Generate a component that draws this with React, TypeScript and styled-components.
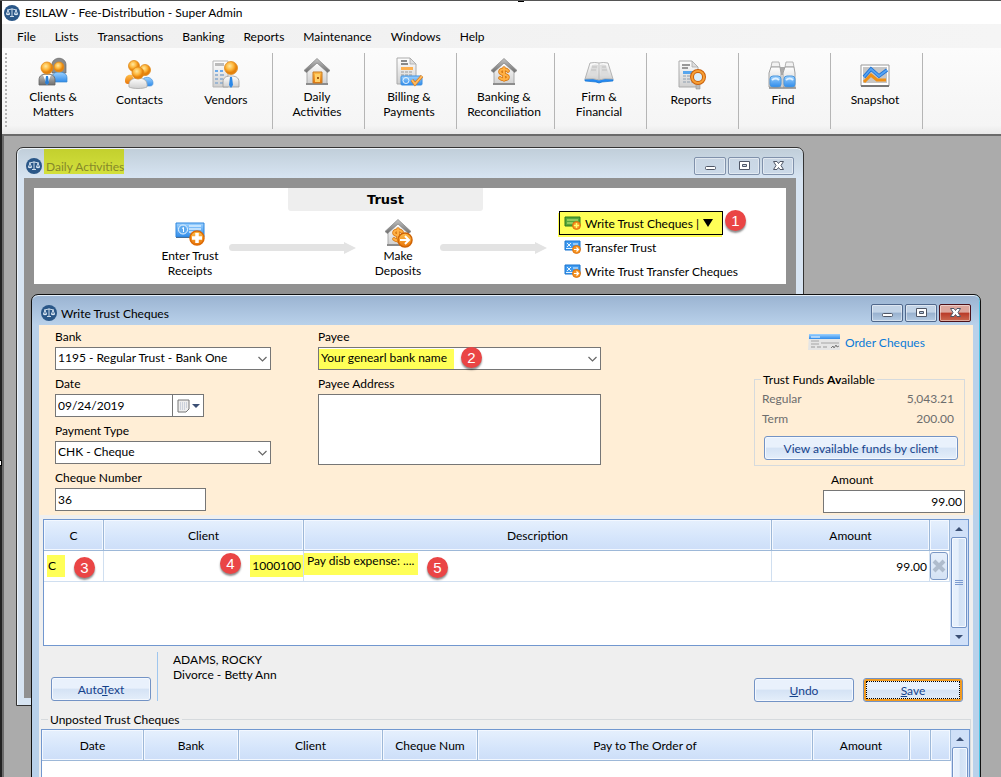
import React from "react";
import styled, { createGlobalStyle, css } from "styled-components";

const Global = createGlobalStyle`
  *, *::before, *::after { box-sizing: border-box; }
  html, body { margin: 0; height: 100%; }
  #root { height: 100%; }
  body, button, input, select, textarea {
    font-family: Lato, "Open Sans", sans-serif;
    font-size: 12px;
    line-height: 15px;
    color: #000;
  }
`;

/* ---------- application frame ---------- */

const Shell = styled.div`
  position: relative;
  display: flex;
  flex-direction: column;
  height: 100vh;
  overflow: hidden;
  border-top: 1px solid #555;
  padding-left: 2px;
  background: #222;
`;

const AppTitle = styled.header`
  display: flex;
  align-items: center;
  gap: 5px;
  height: 23px;
  padding-left: 2px;
  background: #fff;
`;

const MenuBar = styled.nav`
  display: flex;
  gap: 19px;
  height: 24px;
  padding-left: 15px;
  background: linear-gradient(90deg, #f0f0f0, #f5f5f5);
`;

const MenuItem = styled.button`
  border: 0;
  padding: 0;
  background: none;
`;

const Toolbar = styled.div`
  display: flex;
  align-items: flex-start;
  height: 86px;
  flex: none;
  padding-top: 5px;
  background: linear-gradient(#fcfcfc, #f7f7f7 60%, #f5f5f5 90%, #e9e9e9);
`;

const Grip = styled.div`
  width: 2px;
  height: 76px;
  margin: 0 3px;
  background: repeating-linear-gradient(#b4b4b4 0 2px, transparent 2px 4px);
`;

const ToolGroup = styled.div<{ $w: number }>`
  display: flex;
  width: ${(p) => p.$w}px;
  height: 76px;
  padding-right: 3px;
  border-right: 1px solid #b5b5b5;
`;

const ToolButton = styled.button<{ $tall?: boolean }>`
  flex: 1;
  display: flex;
  flex-direction: column;
  align-items: center;
  justify-content: flex-start;
  gap: 2px;
  padding: ${(p) => (p.$tall ? 4 : 7)}px 0 0;
  border: 0;
  background: none;
  white-space: pre-line;
  text-align: center;
`;

const Desktop = styled.main`
  position: relative;
  flex: 1;
  overflow: hidden;
  border-top: 2px solid #6b6b6b;
  border-left: 2px solid #6b6b6b;
  background: #ababab;
`;

const SelectionHandle = styled.i<{ $side: "top" | "left" }>`
  position: absolute;
  width: 6px;
  height: 6px;
  ${(p) =>
    p.$side === "top"
      ? css`top: -5px; left: 518px; background: #000;`
      : css`top: 459px; left: -4px; background: #fff; border: 1px solid #000;`}
`;

/* ---------- floating windows ---------- */

const Window = styled.section<{ $active?: boolean }>`
  position: absolute;
  display: flex;
  flex-direction: column;
  border: 1px solid #333;
  border-radius: 7px 7px 0 0;
  padding: 0 7px 7px;
  ${(p) =>
    p.$active
      ? css`
          top: 158px;
          left: 27px;
          right: 20px;
          border-color: #111;
          box-shadow: inset 0 1px 0 #e6f0fa, inset -1px 0 0 #4cc4e4;
          background: linear-gradient(#9ab3d1, #b9d1ea 30px);
        `
      : css`
          top: 11px;
          left: 12px;
          width: 788px;
          box-shadow: inset 0 1px 0 #eef4fa, inset 1px 0 0 #eef4fa;
          background: linear-gradient(#c0ced9, #d7e4f2 30px);
        `}
`;

const WindowBar = styled.div`
  display: flex;
  align-items: center;
  gap: 4px;
  height: 30px;
  padding: 5px 2px 0 2px;
`;

const WindowTitle = styled.h2`
  flex: 1;
  margin: 0;
  padding-top: 1px;
  font-size: 12px;
  font-weight: 400;
`;

const TitleMark = styled.mark`
  display: inline-block;
  margin: -10px 0 0 -2px;
  padding: 10px 0 0 2px;
  background: linear-gradient(#c3d02e, #d3e03c);
  color: #85882a;
`;

const Controls = styled.div`
  display: flex;
  gap: 2px;
`;

const ControlButton = styled.button<{ $active?: boolean; $close?: boolean }>`
  display: grid;
  place-items: center;
  width: 32px;
  height: 18px;
  padding: 0;
  border-radius: 2px;
  border: 1px solid ${(p) => (p.$active ? (p.$close ? "#4d1119" : "#50688c") : "#8091ab")};
  box-shadow: inset 0 0 0 1px rgba(255, 255, 255, 0.45);
  background: ${(p) =>
    !p.$active
      ? "linear-gradient(#c9d6e4, #cbd9e8)"
      : p.$close
        ? "linear-gradient(#dda79d 0 45%, #b93a27 50%, #cb6a51)"
        : "linear-gradient(#c3d4e7 0 45%, #98b1cf 50%, #b5cbe3)"};
`;

/* ---------- daily activities ---------- */

const DailyBody = styled.div`
  min-height: 520px;
  padding: 10px;
  background: #919191;
`;

const FlowPanel = styled.div`
  height: 96px;
  background: #fff;
`;

const FlowTab = styled.h3`
  width: 195px;
  height: 23px;
  margin: 0 0 0 254px;
  background: #eee;
  border-radius: 0 0 3px 3px;
  font: bold 13px/23px "DejaVu Sans", sans-serif;
  text-align: center;
`;

const FlowRow = styled.div`
  display: flex;
  align-items: center;
  height: 73px;
  padding-left: 117px;
`;

const FlowStep = styled.button<{ $w: number }>`
  display: flex;
  flex-direction: column;
  align-items: center;
  width: ${(p) => p.$w}px;
  padding: 0;
  border: 0;
  background: none;
  white-space: pre-line;
`;

const Arrow = styled.i<{ $w: number }>`
  display: flex;
  align-items: center;
  width: ${(p) => p.$w}px;
  height: 13px;
  &::before {
    content: "";
    flex: 1;
    height: 7px;
    border-radius: 4px 0 0 4px;
    background: #e3e3e3;
  }
  &::after {
    content: "";
    border-left: 12px solid #e3e3e3;
    border-top: 6px solid transparent;
    border-bottom: 6px solid transparent;
  }
`;

const FlowList = styled.div`
  align-self: flex-start;
  display: flex;
  flex-direction: column;
  align-items: flex-start;
  margin-left: 12px;
`;

const FlowLink = styled.button<{ $on?: boolean }>`
  display: flex;
  align-items: center;
  gap: 4px;
  height: 24px;
  padding: 0 9px 0 4px;
  white-space: nowrap;
  border: 1px solid ${(p) => (p.$on ? "#000" : "transparent")};
  background: ${(p) => (p.$on ? "#ffff57" : "none")};
  ${(p) => p.$on && "box-shadow: -1px 2px 0 #ffff57;"}
`;

/* ---------- write trust cheques ---------- */

const Form = styled.form`
  background: #efefef;
`;

const Cream = styled.div`
  display: flex;
  align-items: flex-start;
  height: 190px;
  padding: 2px 8px 0 16px;
  background: #ffeed6;
`;

const Column = styled.div<{ $w: number; $left?: string }>`
  display: flex;
  flex-direction: column;
  gap: 4px;
  width: ${(p) => p.$w}px;
  margin-left: ${(p) => p.$left ?? "0"};
`;

const Field = styled.label`
  display: flex;
  flex-direction: column;
  line-height: 20px;
`;

const AmountField = styled(Field)`
  align-self: flex-end;
  width: 142px;
  & > span { padding-left: 8px; }
`;

const boxed = css`
  border: 1px solid #767676;
  border-radius: 0;
  background-color: #fff;
  outline: 0;
`;

const TextInput = styled.input<{ $w?: string; $right?: boolean }>`
  ${boxed}
  width: ${(p) => p.$w ?? "100%"};
  height: 23px;
  padding: 0 2px;
  text-align: ${(p) => (p.$right ? "right" : "left")};
`;

const SelectWrap = styled.span`
  position: relative;
  display: flex;
  & > svg {
    position: absolute;
    right: 3px;
    top: 8px;
    pointer-events: none;
  }
`;

const Select = styled.select<{ $marked?: boolean }>`
  ${boxed}
  appearance: none;
  width: 100%;
  height: 23px;
  padding: 0 16px 2px 2px;
  ${(p) => p.$marked && "background: linear-gradient(#ffff57, #ffff57) 0 100% / 135px 20px no-repeat #fff;"}
`;

const DateRow = styled.span`
  display: flex;
`;

const DateButton = styled.button`
  ${boxed}
  display: flex;
  align-items: center;
  justify-content: center;
  gap: 2px;
  width: 32px;
  height: 23px;
  margin-left: -1px;
  padding: 0;
`;

const Address = styled.textarea`
  ${boxed}
  height: 71px;
  resize: none;
`;

const OrderLink = styled.a`
  display: flex;
  align-items: center;
  gap: 5px;
  height: 30px;
  margin-bottom: 11px;
  padding-left: 54px;
  color: #0a7ad8;
  text-decoration: none;
`;

const Funds = styled.fieldset`
  margin: 0;
  padding: 2px 6px 5px;
  border: 1px solid #d6dadd;
  min-width: 0;
`;

const Legend = styled.legend`
  padding: 0 2px;
  line-height: 15px;
`;

const FundLine = styled.div`
  display: flex;
  justify-content: space-between;
  padding: 0 4px 0 1px;
  line-height: 20px;
  color: #6d6d6d;
`;

const PushButton = styled.button<{ $w?: number; $focus?: boolean }>`
  width: ${(p) => (p.$w ? `${p.$w}px` : "auto")};
  height: 24px;
  padding: 0;
  border: 1px solid #7393c5;
  border-radius: 3px;
  background: linear-gradient(#e9f1fc 0 45%, #d5e3f5 52%, #e4eefa);
  box-shadow: inset 0 0 0 1px #f4f8fe;
  color: #15428b;
  ${(p) =>
    p.$focus &&
    css`
      outline: 1px dotted #000;
      outline-offset: -4px;
      box-shadow: inset 0 0 0 2px #f09a20;
    `}
`;

const FundsButton = styled(PushButton)`
  display: block;
  width: calc(100% - 3px);
  margin: 7px 0 0 3px;
`;

const GridFrame = styled.div<{ $h: number }>`
  display: flex;
  height: ${(p) => p.$h}px;
  border: 1px solid #7197cf;
  background: #fff;
`;

const GridArea = styled.div`
  flex: 1;
  min-width: 0;
`;

const Grid = styled.table`
  width: 100%;
  table-layout: fixed;
  border-collapse: separate;
  border-spacing: 0;
`;

const Th = styled.th<{ $w?: number }>`
  width: ${(p) => (p.$w ? `${p.$w}px` : "auto")};
  height: 31px;
  padding: 0;
  font-weight: 400;
  border-right: 1px solid #9db8d8;
  border-bottom: 1px solid #9db8d8;
  box-shadow: inset 0 0 0 1px #f3f8ff;
  background: linear-gradient(#e6f0fd, #d5e5fb 60%, #cddef8);
`;

const Td = styled.td<{ $align?: string }>`
  height: 31px;
  padding: 0 2px;
  text-align: ${(p) => p.$align ?? "left"};
  border-right: 1px solid #d0dff0;
  border-bottom: 1px solid #d0dff0;
`;

const Mark = styled.mark<{ $l?: number; $r?: number }>`
  display: inline-block;
  height: 22px;
  margin: 0 -2px;
  padding: 0 ${(p) => p.$r ?? 2}px 0 ${(p) => p.$l ?? 2}px;
  line-height: 22px;
  vertical-align: middle;
  background: #ffff57;
`;

const CodeMark = styled(Mark)`
  margin-left: 1px;
`;

const RaisedMark = styled(Mark)`
  padding-bottom: 7px;
  line-height: 15px;
  margin-bottom: 5px;
`;

const DeleteButton = styled.button`
  display: grid;
  place-items: center;
  width: 18px;
  height: 28px;
  margin-left: -2px;
  padding: 0;
  border: 1px solid #7c98c4;
  border-radius: 3px;
  background: linear-gradient(#e6effb, #d5e2f4);
`;

const Track = styled.div`
  display: flex;
  flex-direction: column;
  align-items: center;
  width: 18px;
  background: #d0e0f8;
`;

const TrackButton = styled.button`
  display: grid;
  place-items: center;
  width: 100%;
  height: 17px;
  flex: none;
  padding: 0;
  border: 0;
  background: none;
`;

const Thumb = styled.div`
  flex: 1;
  display: grid;
  place-items: center;
  width: 16px;
  border: 1px solid #7393c5;
  border-radius: 2px;
  box-shadow: inset 0 0 0 1px #f5f9ff;
  background: linear-gradient(90deg, #e6f0fc 45%, #d2e1f4 50%, #dbe8f8);
`;

const Lines = styled.div`
  padding: 4px 4px 0 4px;
`;

const Actions = styled.div`
  display: flex;
  align-items: flex-end;
  padding: 0 10px 0 12px;
  height: 55px;
`;

const Matter = styled.p`
  flex: 1;
  height: 49px;
  margin: 0 0 0 6px;
  padding-left: 15px;
  border-left: 1px solid #9fc6ee;
`;

const ActionButtons = styled.div`
  display: flex;
  gap: 9px;
  margin-bottom: -1px;
`;

const Unposted = styled.fieldset`
  min-width: 0;
  margin: 11px 2px 0;
  padding: 2px 0 0;
  border: solid #d6dadd;
  border-width: 1px 1px 0 0;
  & > legend { margin-left: 7px; }
`;

const Badge = styled.b<{ $x: number; $y: number }>`
  position: absolute;
  z-index: 2;
  left: ${(p) => p.$x}px;
  top: ${(p) => p.$y}px;
  width: 21px;
  height: 21px;
  border-radius: 50%;
  background: #ea4545;
  box-shadow: 0 2px 2px rgba(0, 0, 0, 0.45);
  color: #fff;
  font: 400 15px/21px "Liberation Sans", sans-serif;
  text-align: center;
`;

/* ---------- drawings ---------- */

const Gradients = () => (
  <svg width="0" height="0" style={{ position: "absolute" }} aria-hidden="true">
    <defs>
      <radialGradient id="gold" cx=".4" cy=".35"><stop offset="0" stopColor="#ffe9a0" /><stop offset=".6" stopColor="#fdb53a" /><stop offset="1" stopColor="#e5820c" /></radialGradient>
      <linearGradient id="silver" x2="0" y2="1"><stop offset="0" stopColor="#fff" /><stop offset="1" stopColor="#cfcfcf" /></linearGradient>
      <linearGradient id="sky" x2="0" y2="1"><stop offset="0" stopColor="#9ed2ff" /><stop offset="1" stopColor="#2f8ceb" /></linearGradient>
      <linearGradient id="steel" x2="0" y2="1"><stop offset="0" stopColor="#c4c4c4" /><stop offset="1" stopColor="#6e6e6e" /></linearGradient>
      <linearGradient id="amber" x2="0" y2="1"><stop offset="0" stopColor="#ffc04d" /><stop offset="1" stopColor="#ea7406" /></linearGradient>
    </defs>
  </svg>
);

const Svg = ({ children, w = 30, h = 30 }: { children: React.ReactNode; w?: number; h?: number }) => (
  <svg width={w} height={h} viewBox={`0 0 ${w} ${h}`} aria-hidden="true">{children}</svg>
);

const Head = ({ x, y, r = 6 }: { x: number; y: number; r?: number }) => (
  <circle cx={x} cy={y} r={r} fill="url(#gold)" stroke="#e08c1e" strokeWidth=".8" />
);

const ClientsIcon = () => (
  <Svg>
    <path d="M14 16V8c0-9 14-9 14 0v8z" fill="#8a8a8a" stroke="#666" strokeWidth=".7" />
    <path d="M14 25v-4c0-5 4-6 7-6s8 1 8 6v4z" fill="url(#sky)" stroke="#3b86cc" strokeWidth=".7" />
    <Head x={21} y={10} r={5} />
    <path d="M1 28v-5c0-5 4-6 8-6s8 1 8 6v5z" fill="url(#steel)" stroke="#666" strokeWidth=".8" />
    <path d="M5 18l4 10 4-10z" fill="#fff" /><path d="M8 19h2l1 7-2 2-2-2z" fill="#2b80d8" />
    <Head x={9} y={11} />
  </Svg>
);

const ContactsIcon = () => (
  <Svg>
    <path d="M1 21c0-5 3-7 7-6l4 9H4c-2 0-3-1-3-3z" fill="url(#amber)" />
    <path d="M16 26l4-8c5-2 9 1 9 5 0 2-1 3-3 3z" fill="url(#sky)" stroke="#4d97dd" strokeWidth=".7" />
    <Head x={10} y={6} r={5.5} /><Head x={21} y={10} r={5.5} />
    <path d="M5 27c-1-7 4-9 9-9s10 2 9 9c-4 2-14 2-18 0z" fill="url(#silver)" stroke="#aaa" strokeWidth=".8" />
    <Head x={14} y={13} r={6} />
  </Svg>
);

const VendorsIcon = () => (
  <Svg>
    <path d="M2 1h15v26H2z" fill="url(#silver)" stroke="#b5b5b5" /><path d="M4 3h9v3H4z" fill="#bbb" />
    <g fill="#68a9eb"><path d="M4 10h3v2H4zM9 10h3v2H9z" /></g>
    <path d="M4 15h3m2 0h4M4 19h3m2 0h3M4 23h3m2 0h3" stroke="#9cb6d2" strokeWidth="2" />
    <path d="M12 27v-5c0-5 4-6 8-6s8 1 8 6v5z" fill="url(#silver)" stroke="#999" strokeWidth=".8" />
    <path d="M19 17h2l1 8-2 3-2-3z" fill="#2b88e8" /><Head x={20} y={8} r={6.5} />
  </Svg>
);

const House = ({ children }: { children: React.ReactNode }) => (
  <Svg>
    <path d="M5 14L15 5l10 9v13H5z" fill="url(#silver)" stroke="#aaa" /><path d="M4 26h22v2H4z" fill="#8c8c8c" />
    <path d="M2 13.500L15 1.500l13 12-2.500 2L15 6 4.500 15.500z" fill="url(#steel)" stroke="#8a8a8a" strokeWidth=".8" />
    {children}
  </Svg>
);

const DollarSign = () => (
  <g fill="none" strokeLinecap="round">
    <path d="M19 14c-2-3-8-2-8 1s8 2 8 5-6 3-8 1M15 11v12" stroke="#d9780f" strokeWidth="3.600" />
    <path d="M19 14c-2-3-8-2-8 1s8 2 8 5-6 3-8 1M15 11v12" stroke="#ffb044" strokeWidth="2" />
  </g>
);

const DailyIcon = () => (
  <House><path d="M11 15h9v11h-9z" fill="url(#amber)" stroke="#c57a24" /><path d="M13 17h5v8h-5z" fill="#ffd069" /><path d="M15 20h2v2h-2z" fill="#a85d10" /></House>
);
const BankIcon = () => <House><DollarSign /></House>;

const Page = () => (
  <>
    <path d="M3 1h13l6 6v20H3z" fill="url(#silver)" stroke="#aaa" /><path d="M16 1v6h6z" fill="#ddd" stroke="#aaa" strokeWidth=".8" />
  </>
);

const BillingIcon = () => (
  <Svg>
    <Page /><path d="M7 4h6M7 7h7" stroke="#666" strokeWidth="1.500" />
    <path d="M7 10h12v3H7z" fill="#fdb050" /><path d="M7 15h12M7 18h12" stroke="#999" strokeDasharray="3 1" />
    <rect x="7" y="19" width="21" height="9" rx="1" fill="url(#sky)" stroke="#3d8fe0" />
    <circle cx="12" cy="23.500" r="3" fill="none" stroke="#e6f4ff" />
    <path d="M18 23l3 4 7-8" fill="none" stroke="#e07b18" strokeWidth="3.200" /><path d="M18 23l3 4 7-8" fill="none" stroke="#ffbd62" strokeWidth="1.800" />
  </Svg>
);

const BookIcon = () => (
  <Svg>
    <path d="M1 22v2l11 1q3 2 6 0l11-1v-2z" fill="#2389f2" stroke="#1673cf" strokeWidth=".7" />
    <path d="M6 6q5-1 9 0 4-1 9 0l5 16q-9-1-14 1-5-2-14-1z" fill="url(#silver)" stroke="#b5b5b5" />
    <path d="M8 8q4-1 6 0l-1 10q-4-1-8 0zM22 8q-4-1-6 0l1 10q4-1 8 0z" fill="#dcdcdc" /><path d="M15 6v17" stroke="#bbb" />
    <path d="M8 10h5M7 13h5M18 10h4M18 13h5" stroke="#c0c0c0" />
  </Svg>
);

const ReportsIcon = () => (
  <Svg>
    <Page /><path d="M6 5h8M6 8h6" stroke="#999" strokeWidth="2" /><path d="M7 11h10v3H7z" fill="#57a6ee" />
    <path d="M7 16h9M7 19h9M7 22h9" stroke="#8e9dad" strokeDasharray="3 1" />
    <path d="M20 22h4v7h-4z" fill="#bbb" stroke="#999" strokeWidth=".6" />
    <circle cx="22" cy="17" r="6" fill="#d9eefd" stroke="#c75f0b" strokeWidth="4" /><circle cx="22" cy="17" r="6" fill="none" stroke="#f8a036" strokeWidth="2" />
  </Svg>
);

const FindIcon = () => (
  <Svg>
    <path d="M12 7h5v8h-5z" fill="#aaa" />
    {[0, 14].map((x) => (
      <g key={x} transform={`translate(${x} 0)`}>
        <path d="M4 2h7l1 5H3z" fill="#f2f2f2" stroke="#a5a5a5" strokeWidth=".8" />
        <path d="M3 7h9l1 6v14H1V13z" fill="url(#silver)" stroke="#a0a0a0" />
        <rect x="2" y="16" width="11" height="11" rx="3" fill="url(#sky)" stroke="#4a97de" /><path d="M4 20q4-3 7 0" stroke="#def0ff" fill="none" strokeWidth="2" />
      </g>
    ))}
    <path d="M1 28h27" stroke="#888" strokeWidth="1.500" />
  </Svg>
);

const SnapshotIcon = () => (
  <Svg>
    <path d="M1 5h28v21H1z" fill="#fff" stroke="#999" /><path d="M3 7h24v16H3z" fill="#c6c6c6" /><path d="M1 25h28v2H1z" fill="#777" />
    <path d="M4 22l7-7 6 5h9" fill="none" stroke="#ef9016" strokeWidth="3" />
    <path d="M4 17l7-8 8 7 8-6" fill="none" stroke="#2274d4" strokeWidth="3.600" /><path d="M4 17l7-8 8 7 8-6" fill="none" stroke="#55a4f5" strokeWidth="1.800" />
  </Svg>
);

const ReceiptIcon = () => (
  <Svg>
    <path d="M1 5h28v14H1z" fill="url(#sky)" stroke="#2c85dc" /><path d="M1 19.500h18" stroke="#4a6e94" />
    <circle cx="8" cy="11.500" r="4.500" fill="#5da9ef" stroke="#e8f5ff" /><path d="M7 10.500l1.500-1v4.500" stroke="#fff" fill="none" />
    <path d="M14 8h12M14 11h12M14 14h6" stroke="#d9eeff" strokeWidth="1.500" />
    <circle cx="22" cy="20" r="7" fill="url(#amber)" stroke="#dc6a05" strokeWidth="1.500" /><path d="M22 15v10M17 20h10" stroke="#fff" strokeWidth="3.500" />
  </Svg>
);

const DepositIcon = () => (
  <House>
    <DollarSign /><circle cx="22" cy="22" r="7" fill="url(#amber)" stroke="#cf6405" strokeWidth="1.500" />
    <path d="M17 22h8M22 18l4 4-4 4" fill="none" stroke="#fff" strokeWidth="2" />
  </House>
);

const NoteIcon = ({ plus }: { plus?: boolean }) => (
  <Svg w={17} h={14}>
    <path d="M1 1h15v9H1z" fill={plus ? "#57a83c" : "#3f9bf0"} stroke={plus ? "#2f7a1e" : "#1b75cf"} />
    {plus ? <path d="M3 4h11M3 7h6" stroke="#cdef7c" /> : <path d="M3 3l4 4M7 3L3 7M9 4h5M2 8.500h8" stroke="#e6f4ff" />}
    <circle cx="12.500" cy="9.500" r="4" fill="#f79421" stroke="#d86b08" strokeWidth=".8" />
    {plus ? <path d="M12.500 7v5M10 9.500h5" stroke="#ffff70" strokeWidth="1.500" /> : <path d="M10 9.500h4M12.500 7.500l2 2-2 2" stroke="#fff" fill="none" strokeWidth="1.200" />}
  </Svg>
);

const ScalesIcon = () => (
  <Svg w={16} h={16}>
    <circle cx="8" cy="8" r="8" fill="#2a5788" />
    <path d="M3 5q5-2 10 0M8 3.500v8M6 11.500h4M2 9h4M10 9h4M4 5L2.500 9M4 5l1.500 4M12 5l-1.500 4M12 5l1.500 4" stroke="#dbe8f4" strokeWidth=".9" fill="none" />
    <path d="M2 9q2 2.500 4 0zM10 9q2 2.500 4 0z" fill="#dbe8f4" />
  </Svg>
);

const ChequeIcon = () => (
  <Svg w={32} h={17}>
    <path d="M1 0h31v16H0z" fill="#e5e5e5" /><path d="M1 0h31v5H1z" fill="url(#sky)" />
    <path d="M3 3h9" stroke="#fff" /><path d="M3 7h8M13 9h18M3 10h8" stroke="#bbb" strokeWidth="1.500" />
    <path d="M3 13h18" stroke="#999" strokeDasharray="4 2" /><path d="M23 14l2-2 1 2 2-3 1 2 2-1" fill="none" stroke="#777" />
  </Svg>
);

const Chevron = () => <Svg w={11} h={8}><path d="M1.500 2l4 4 4-4" fill="none" stroke="#666" strokeWidth="1.200" /></Svg>;

const CalendarIcon = () => (
  <Svg w={13} h={14}>
    <path d="M1 1h11v9l-3 3H1z" fill="#eee" stroke="#777" /><path d="M3 4h7M3 6h7M3 8h7M3 10h5" stroke="#a9b4c8" strokeDasharray="1 1" />
  </Svg>
);

const Triangle = ({ up, w = 8 }: { up?: boolean; w?: number }) => (
  <Svg w={w} h={w / 2}><path d={up ? `M0 ${w / 2}L${w / 2} 0L${w} ${w / 2}z` : `M0 0h${w}L${w / 2} ${w / 2}z`} fill="#3b4f74" /></Svg>
);

const glyph = { fill: "#fff", stroke: "#4f5666", strokeWidth: 1 };
const Minimize = () => <Svg w={14} h={12}><rect x="2.500" y="6.500" width="10" height="3" rx="1" {...glyph} /></Svg>;
const Maximize = () => <Svg w={14} h={12}><path fillRule="evenodd" d="M2.500 1.500h10v8h-10zM5.500 4.500v2h4v-2z" {...glyph} /></Svg>;
const Close = () => (
  <Svg w={14} h={12}><path d="M2.500 1.500h3.500l1.500 2 1.500-2h3.500L10 5.500l2.500 4H9l-1.500-2-1.500 2H2.500l2.500-4z" {...glyph} /></Svg>
);

/* ---------- pieces ---------- */

const WindowControls = ({ active }: { active?: boolean }) => (
  <Controls>
    <ControlButton type="button" $active={active} aria-label="Minimize"><Minimize /></ControlButton>
    <ControlButton type="button" $active={active} aria-label="Maximize"><Maximize /></ControlButton>
    <ControlButton type="button" $active={active} $close aria-label="Close"><Close /></ControlButton>
  </Controls>
);

const ScrollBar = () => (
  <Track>
    <TrackButton type="button" aria-label="Scroll up"><Triangle up /></TrackButton>
    <Thumb><Svg w={8} h={8}><path d="M0 1.500h8M0 3.500h8M0 5.500h8" stroke="#7c9bd0" /></Svg></Thumb>
    <TrackButton type="button" aria-label="Scroll down"><Triangle /></TrackButton>
  </Track>
);

const Dropdown = ({ value, marked }: { value: string; marked?: boolean }) => (
  <SelectWrap>
    <Select $marked={marked} defaultValue={value}><option>{value}</option></Select>
    <Chevron />
  </SelectWrap>
);

const menus = ["File", "Lists", "Transactions", "Banking", "Reports", "Maintenance", "Windows", "Help"];

const toolGroups: { w: number; items: [string, React.FC][] }[] = [
  { w: 263, items: [["Clients &\nMatters", ClientsIcon], ["Contacts", ContactsIcon], ["Vendors", VendorsIcon]] },
  { w: 92, items: [["Daily\nActivities", DailyIcon]] },
  { w: 92, items: [["Billing &\nPayments", BillingIcon]] },
  { w: 98, items: [["Banking &\nReconciliation", BankIcon]] },
  { w: 92, items: [["Firm &\nFinancial", BookIcon]] },
  { w: 92, items: [["Reports", ReportsIcon]] },
  { w: 92, items: [["Find", FindIcon]] },
  { w: 92, items: [["Snapshot", SnapshotIcon]] },
];

const unpostedColumns: [string, number?][] = [
  ["Date", 102], ["Bank", 95], ["Client", 144], ["Cheque Num", 95], ["Pay to The Order of"], ["Amount", 97], ["", 21], ["", 20],
];

const DailyActivities = () => (
  <Window>
    <WindowBar>
      <ScalesIcon />
      <WindowTitle><TitleMark>Daily Activities</TitleMark></WindowTitle>
      <WindowControls />
    </WindowBar>
    <DailyBody>
      <FlowPanel>
        <FlowTab>Trust</FlowTab>
        <FlowRow>
          <FlowStep type="button" $w={78}><ReceiptIcon />{"Enter Trust\nReceipts"}</FlowStep>
          <Arrow $w={127} />
          <FlowStep type="button" $w={84}><DepositIcon />{"Make\nDeposits"}</FlowStep>
          <Arrow $w={107} />
          <FlowList>
            <FlowLink type="button" $on><NoteIcon plus />Write Trust Cheques | <Svg w={10} h={8}><path d="M0 0h10L5 8z" /></Svg></FlowLink>
            <FlowLink type="button"><NoteIcon />Transfer Trust</FlowLink>
            <FlowLink type="button"><NoteIcon />Write Trust Transfer Cheques</FlowLink>
          </FlowList>
        </FlowRow>
      </FlowPanel>
    </DailyBody>
  </Window>
);

const TrustCheques = () => (
  <Window $active>
    <WindowBar>
      <ScalesIcon />
      <WindowTitle>Write Trust Cheques</WindowTitle>
      <WindowControls active />
    </WindowBar>
    <Form onSubmit={(e) => e.preventDefault()}>
      <Cream>
        <Column $w={216}>
          <Field>Bank<Dropdown value="1195 - Regular Trust - Bank One" /></Field>
          <Field as="div">
            <label htmlFor="date">Date</label>
            <DateRow>
              <TextInput id="date" $w="118px" defaultValue="09/24/2019" />
              <DateButton type="button" aria-label="Open calendar"><CalendarIcon /><Triangle /></DateButton>
            </DateRow>
          </Field>
          <Field>Payment Type<Dropdown value="CHK - Cheque" /></Field>
          <Field>Cheque Number<TextInput $w="151px" defaultValue="36" /></Field>
        </Column>
        <Column $w={283} $left="47px">
          <Field>Payee<Dropdown value="Your genearl bank name" marked /></Field>
          <Field>Payee Address<Address /></Field>
        </Column>
        <Column $w={211} $left="auto">
          <OrderLink href="#order"><ChequeIcon />Order Cheques</OrderLink>
          <Funds>
            <Legend>Trust Funds <b>Av</b>ailable</Legend>
            <FundLine><span>Regular</span><span>5,043.21</span></FundLine>
            <FundLine><span>Term</span><span>200.00</span></FundLine>
            <FundsButton type="button">View available funds by client</FundsButton>
          </Funds>
          <AmountField><span>Amount</span><TextInput $right defaultValue="99.00" /></AmountField>
        </Column>
      </Cream>
      <Lines>
        <GridFrame $h={127}>
          <GridArea>
            <Grid>
              <thead>
                <tr><Th $w={60}>C</Th><Th $w={200}>Client</Th><Th>Description</Th><Th $w={158}>Amount</Th><Th $w={20} /></tr>
              </thead>
              <tbody>
                <tr>
                  <Td><CodeMark $l={1} $r={9}>C</CodeMark></Td>
                  <Td $align="right"><Mark>1000100</Mark></Td>
                  <Td><RaisedMark $l={3} $r={4}>Pay disb expense: ....</RaisedMark></Td>
                  <Td $align="right">99.00</Td>
                  <Td><DeleteButton type="button" aria-label="Delete line"><Svg w={14} h={14}><path d="M2 2l10 10M12 2L2 12" stroke="#afbccd" strokeWidth="4" /></Svg></DeleteButton></Td>
                </tr>
              </tbody>
            </Grid>
          </GridArea>
          <ScrollBar />
        </GridFrame>
      </Lines>
      <Actions>
        <PushButton type="button" $w={100}>Auto<u>T</u>ext</PushButton>
        <Matter>ADAMS, ROCKY<br />Divorce - Betty Ann</Matter>
        <ActionButtons>
          <PushButton type="button" $w={100}><u>U</u>ndo</PushButton>
          <PushButton type="submit" $w={100} $focus><u>S</u>ave</PushButton>
        </ActionButtons>
      </Actions>
      <Unposted>
        <Legend>Unposted Trust Cheques</Legend>
        <GridFrame $h={127}>
          <GridArea>
            <Grid>
              <thead>
                <tr>{unpostedColumns.map(([name, w], i) => <Th key={i} $w={w}>{name}</Th>)}</tr>
              </thead>
            </Grid>
          </GridArea>
          <ScrollBar />
        </GridFrame>
      </Unposted>
    </Form>
  </Window>
);

export default function App() {
  return (
    <Shell>
      <Global />
      <Gradients />
      <AppTitle><ScalesIcon />ESILAW - Fee-Distribution - Super Admin</AppTitle>
      <MenuBar>{menus.map((m) => <MenuItem key={m} type="button">{m}</MenuItem>)}</MenuBar>
      <Toolbar>
        <Grip />
        {toolGroups.map((g, i) => (
          <ToolGroup key={i} $w={g.w}>
            {g.items.map(([label, Icon]) => (
              <ToolButton key={label} type="button" $tall={label.includes("\n")}><Icon />{label}</ToolButton>
            ))}
          </ToolGroup>
        ))}
      </Toolbar>
      <Desktop>
        <DailyActivities />
        <TrustCheques />
        <Badge $x={721} $y={74}>1</Badge>
        <Badge $x={457} $y={211}>2</Badge>
        <Badge $x={70} $y={421}>3</Badge>
        <Badge $x={216} $y={417}>4</Badge>
        <Badge $x={423} $y={421}>5</Badge>
      </Desktop>
      <SelectionHandle $side="top" />
      <SelectionHandle $side="left" />
    </Shell>
  );
}
